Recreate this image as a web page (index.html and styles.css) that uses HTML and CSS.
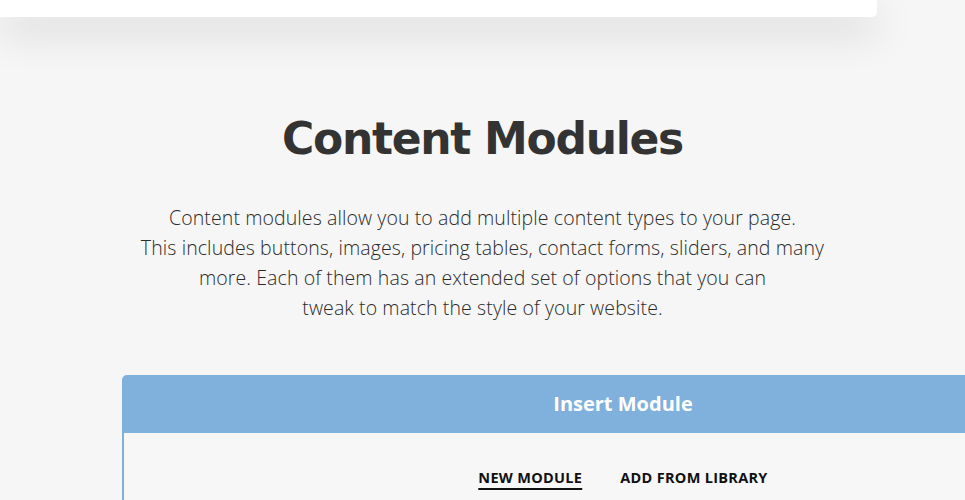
FILE: index.html
```html
<!DOCTYPE html>
<html lang="en">
<head>
    <meta charset="UTF-8">
    <meta name="viewport" content="width=device-width, initial-scale=1.0">
    <title>Content Modules</title>
    <link rel="stylesheet" href="styles.css">
</head>
<body>
    <div class="top-card"></div>

    <section class="intro">
        <h1>Content Modules</h1>
        <p>
            Content modules allow you to add multiple content types to your page.<br>
            This includes buttons, images, pricing tables, contact forms, sliders, and many<br>
            more. Each of them has an extended set of options that you can<br>
            tweak to match the style of your website.
        </p>
    </section>

    <div class="modal">
        <div class="modal-header">Insert Module</div>
        <div class="modal-body">
            <nav class="tabs">
                <a class="tab active" href="#">New Module</a>
                <a class="tab" href="#">Add From Library</a>
            </nav>
        </div>
    </div>
</body>
</html>
```

FILE: styles.css
```css
html, body {
    overflow: hidden;
}
body {
    margin: 0;
    height: 500px;
    background: #f6f6f6;
    font-family: "Open Sans", sans-serif;
    color: #333;
}
.top-card {
    width: 877px;
    height: 17px;
    background: #fff;
    border-radius: 0 0 5px 0;
    box-shadow: 0 14px 40px rgba(0, 0, 0, 0.17);
}
.intro {
    text-align: center;
}
h1 {
    margin: 96px 0 0;
    font-family: "DejaVu Sans", sans-serif;
    font-weight: 700;
    font-size: 44px;
    line-height: 52px;
    letter-spacing: -1.3px;
    color: #333;
}
.intro p {
    margin: 38px 0 0;
    font-family: "Open Sans", sans-serif;
    font-weight: 300;
    font-size: 19.5px;
    line-height: 30px;
    letter-spacing: 0.1px;
    color: #2b2b2b;
}
.modal {
    margin: 52px 0 0 122px;
    width: 998px;
    border: 2px solid #7fb0db;
    border-radius: 5px 5px 0 0;
    background: #f7f7f7;
}
.modal-header {
    height: 56px;
    line-height: 54px;
    background: #80b0dc;
    color: #fff;
    text-align: center;
    font-weight: 700;
    font-size: 20px;
}
.modal-body {
    padding: 35px 0 40px;
}
.tabs {
    display: flex;
    justify-content: center;
    gap: 38px;
}
.tab {
    color: #111;
    text-decoration: none;
    text-transform: uppercase;
    font-weight: 700;
    font-size: 14.5px;
    letter-spacing: 0.3px;
}
.tab.active {
    text-decoration: underline;
    text-decoration-thickness: 1.5px;
    text-underline-offset: 5px;
}
```
